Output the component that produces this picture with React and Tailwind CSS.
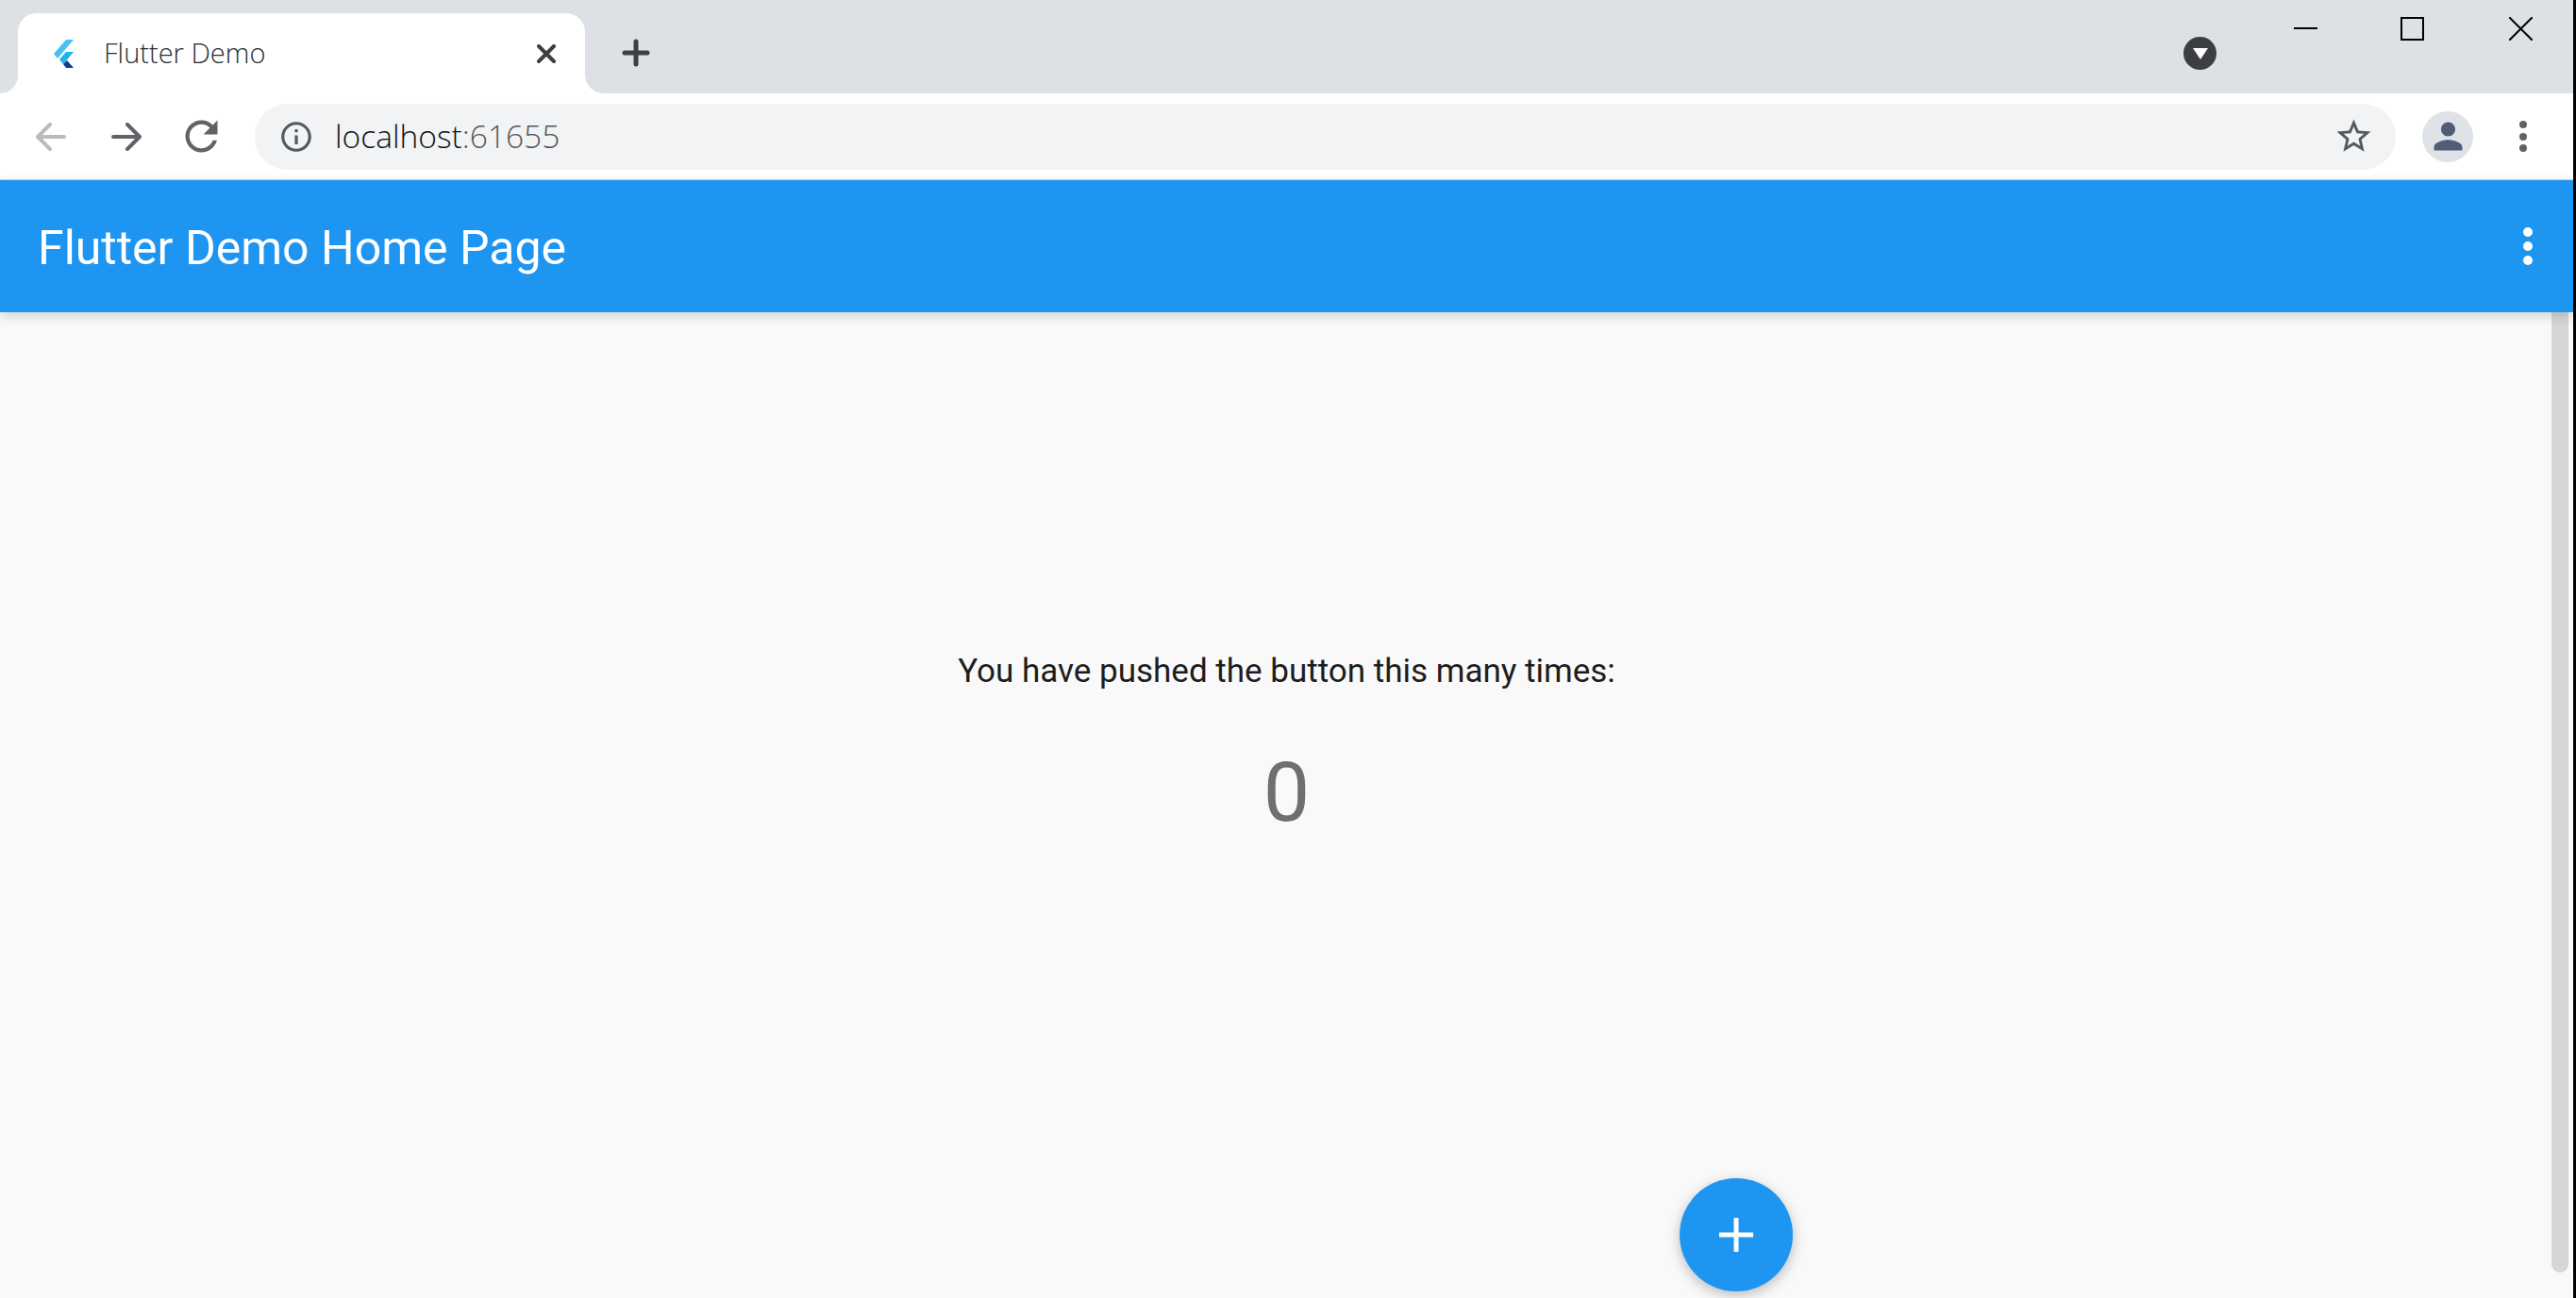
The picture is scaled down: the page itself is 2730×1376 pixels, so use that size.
import React from 'react'

function FlutterLogo() {
  return (
    <svg width="21" height="30" viewBox="0 0 21 30" className="shrink-0">
      <path d="M21 0H13L0 15l4 5z" fill="#45c3f5" />
      <path d="M21 13h-8L6 21l4 5z" fill="#1fb1ee" />
      <path d="M10 26l4-4 7 8h-8z" fill="#0b3f94" />
    </svg>
  )
}

function ChromeIcon({ size, path, color }) {
  return (
    <svg width={size} height={size} viewBox="0 0 24 24" fill={color} className="shrink-0">
      <path d={path} />
    </svg>
  )
}

function Arrow({ color, flip }) {
  return (
    <svg
      width="32"
      height="30"
      viewBox="0 0 32 30"
      fill="none"
      stroke={color}
      strokeWidth="4"
      strokeLinecap="round"
      strokeLinejoin="round"
      className={flip ? 'shrink-0 -scale-x-100' : 'shrink-0'}
    >
      <path d="M2 15h27M17 2l13 13-13 13" />
    </svg>
  )
}

function App() {
  return (
    <div className="relative flex h-[1376px] w-[2730px] overflow-hidden bg-black">
      <div className="flex w-[2727px] flex-col">
        {/* Tab strip */}
        <div className="flex h-[99px] shrink-0 bg-[#dde1e6]">
          <div className="flex flex-1 items-center pl-[19px] pt-[14px]">
            <div className="relative flex h-[85px] w-[601px] items-center rounded-t-[20px] bg-white pl-[38px] pr-[31px]">
              <div className="absolute bottom-0 left-[-19px] h-[19px] w-[19px] bg-white">
                <div className="h-full w-full rounded-br-[19px] bg-[#dde1e6]" />
              </div>
              <div className="absolute bottom-0 right-[-20px] h-[20px] w-[20px] bg-white">
                <div className="h-full w-full rounded-bl-[20px] bg-[#dde1e6]" />
              </div>
              <FlutterLogo />
              <span className="mb-[3px] ml-[32px] flex-1 font-['Open_Sans',sans-serif] text-[29px] font-light leading-none text-[#2a2d30]">
                Flutter Demo
              </span>
              <svg width="20" height="20" viewBox="0 0 20 20" stroke="#3c4043" strokeWidth="4" strokeLinecap="round">
                <path d="M2 2l16 16M18 2L2 18" />
              </svg>
            </div>
            <svg width="30" height="30" viewBox="0 0 30 30" stroke="#3c4043" strokeWidth="5" strokeLinecap="round" className="mb-[1px] ml-[39px]">
              <path d="M15 3v24M3 15h24" />
            </svg>
            <div className="flex-1" />
            <div className="flex h-[35px] w-[35px] items-center justify-center rounded-full bg-[#3c3e41]">
              <div className="h-0 w-0 border-x-[8px] border-t-[12px] border-x-transparent border-t-white" />
            </div>
          </div>
          <div className="ml-[82px] flex items-start gap-[88px] pr-[43px] pt-[18px]">
            <svg width="25" height="25" viewBox="0 0 25 25" stroke="#000" strokeWidth="2">
              <path d="M0 12h25" />
            </svg>
            <svg width="25" height="25" viewBox="0 0 25 25" fill="none" stroke="#000" strokeWidth="2" className="mr-[2px]">
              <path d="M1 1h23v23H1z" />
            </svg>
            <svg width="25" height="25" viewBox="0 0 25 25" stroke="#000" strokeWidth="2">
              <path d="M0 0l25 25M25 0L0 25" />
            </svg>
          </div>
        </div>

        {/* Toolbar */}
        <div className="flex h-[92px] shrink-0 items-center border-b border-[#d3d6da] bg-white pl-[38px]">
          <Arrow color="#b9bbbe" flip />
          <div className="ml-[48px]">
            <Arrow color="#5f6368" />
          </div>
          <div className="ml-[38px]">
            <ChromeIcon
              size={51}
              color="#5f6368"
              path="M17.65 6.35C16.2 4.9 14.21 4 12 4c-4.42 0-7.99 3.58-7.99 8s3.57 8 7.99 8c3.73 0 6.84-2.55 7.73-6h-2.08c-.82 2.33-3.04 4-5.65 4-3.31 0-6-2.69-6-6s2.69-6 6-6c1.66 0 3.14.69 4.22 1.78L13 11h7V4l-2.35 2.35z"
            />
          </div>
          <div className="ml-[31px] flex h-[70px] w-[2269px] items-center rounded-full bg-[#f1f3f4] pl-[25px] pr-[23px]">
            <ChromeIcon
              size={38}
              color="#55585c"
              path="M11 17h2v-6h-2v6zm1-15C6.48 2 2 6.48 2 12s4.48 10 10 10 10-4.48 10-10S17.52 2 12 2zm0 18c-4.41 0-8-3.59-8-8s3.59-8 8-8 8 3.59 8 8-3.59 8-8 8zM11 9h2V7h-2v2z"
            />
            <span className="ml-[22px] flex-1 font-['Open_Sans',sans-serif] text-[33.5px] font-light leading-none text-[#55585c]">
              <span className="text-[#111214]">localhost</span>:61655
            </span>
            <ChromeIcon
              size={43}
              color="#55585c"
              path="M22 9.24l-7.19-.62L12 2 9.19 8.63 2 9.24l5.46 4.73L5.82 21 12 17.27 18.18 21l-1.63-7.03L22 9.24zM12 15.4l-3.76 2.27 1-4.28-3.32-2.88 4.38-.38L12 6.1l1.71 4.04 4.38.38-3.32 2.88 1 4.28L12 15.4z"
            />
          </div>
          <div className="ml-[28px] flex h-[54px] w-[54px] items-center justify-center rounded-full bg-[#dfe2e7]">
            <ChromeIcon
              size={45}
              color="#505d77"
              path="M12 12c2.21 0 4-1.79 4-4s-1.79-4-4-4-4 1.79-4 4 1.79 4 4 4zm0 2c-2.67 0-8 1.34-8 4v2h16v-2c0-2.66-5.33-4-8-4z"
            />
          </div>
          <div className="ml-[49px] flex flex-col gap-[4.5px]">
            <div className="h-[8px] w-[8px] rounded-full bg-[#5f6368]" />
            <div className="h-[8px] w-[8px] rounded-full bg-[#5f6368]" />
            <div className="h-[8px] w-[8px] rounded-full bg-[#5f6368]" />
          </div>
        </div>

        {/* App bar */}
        <div className="z-10 flex h-[140px] shrink-0 items-center justify-between bg-[#1f95f2] pl-[40px] pr-[43px] shadow-[0_4px_12px_rgba(0,0,0,0.16)]">
          <h1 className="pt-[3px] font-['Roboto',sans-serif] text-[50px] font-normal leading-none text-white">
            Flutter Demo Home Page
          </h1>
          <div className="flex flex-col gap-[5px]">
            <div className="h-[10px] w-[10px] rounded-full bg-white" />
            <div className="h-[10px] w-[10px] rounded-full bg-white" />
            <div className="h-[10px] w-[10px] rounded-full bg-white" />
          </div>
        </div>

        {/* Page body */}
        <div className="relative flex flex-1 flex-col items-center bg-[#f9f9f9] pt-[354px] font-['Roboto',sans-serif]">
          <p className="text-[35px] leading-[54px] text-[#1d1d1d]">You have pushed the button this many times:</p>
          <p className="mt-[49px] text-[88px] leading-[104px] text-[#6f6f72]">0</p>
          <div className="absolute right-[5px] top-0 h-[1018px] w-[18px] rounded-b-full rounded-t-[9px] bg-[#d6d6d6]" />
          <button className="absolute bottom-[7px] left-[1780px] flex h-[120px] w-[120px] items-center justify-center rounded-full bg-[#1f95f2] shadow-[0_4px_14px_rgba(0,0,0,0.25)]">
            <svg width="36" height="36" viewBox="0 0 36 36" stroke="#fff" strokeWidth="5">
              <path d="M18 0v36M0 18h36" />
            </svg>
          </button>
        </div>
      </div>
      <div className="w-[3px] bg-black" />
    </div>
  )
}

export default App
